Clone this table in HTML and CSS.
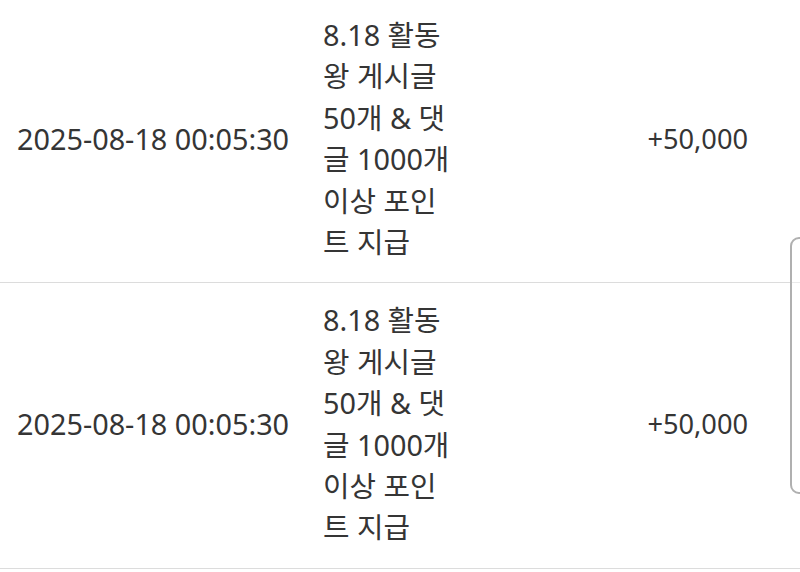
FILE: index.html
```html
<!DOCTYPE html>
<html lang="ko">
<head>
<meta charset="utf-8">
<link rel="stylesheet" href="styles.css">
</head>
<body>
<div class="list">
  <div class="row">
    <div class="date">2025-08-18 00:05:30</div>
    <div class="desc">8.18 활동왕 게시글 50개 &amp; 댓글 1000개 이상 포인트 지급</div>
    <div class="amount">+50,000</div>
  </div>
  <div class="row">
    <div class="date">2025-08-18 00:05:30</div>
    <div class="desc">8.18 활동왕 게시글 50개 &amp; 댓글 1000개 이상 포인트 지급</div>
    <div class="amount">+50,000</div>
  </div>
</div>
<div class="scroll-handle"></div>
</body>
</html>
```

FILE: styles.css
```css
html, body {
  margin: 0;
  padding: 0;
  background: #fff;
  overflow: hidden;
}
body {
  font-family: "Noto Sans", "Noto Sans CJK KR", sans-serif;
  font-size: 28.8px;
  color: #353535;
}
.list {
  margin-top: -2px;
}
.row {
  display: grid;
  grid-template-columns: 306px 127px 1fr;
  align-items: center;
  padding: 16px 0 20px 17px;
  border-bottom: 1px solid #dcdcdc;
  line-height: 41.4px;
}
.date {
  white-space: nowrap;
}
.desc {
  word-break: break-all;
}
.amount {
  text-align: right;
  padding-right: 52px;
  font-size: 27.2px;
}
.scroll-handle {
  position: fixed;
  top: 237px;
  right: -12px;
  width: 18px;
  height: 253px;
  border: 2px solid #b0b0b0;
  border-radius: 9px;
  background: rgba(255,255,255,0.4);
}
```
